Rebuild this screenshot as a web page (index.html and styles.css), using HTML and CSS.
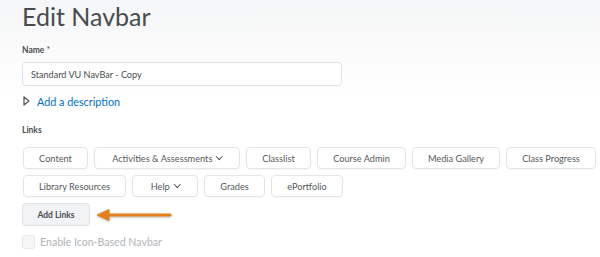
FILE: index.html
```html
<!DOCTYPE html>
<html lang="en">
<head>
    <meta charset="UTF-8">
    <title>Edit Navbar</title>
    <link rel="stylesheet" href="styles.css">
</head>
<body>
    <div class="page">
        <h1>Edit Navbar</h1>

        <label class="field-label" for="navName">Name <span class="req">*</span></label>
        <input class="text-input" id="navName" type="text" value="Standard VU NavBar - Copy">

        <div class="description">
            <svg class="tri" width="7" height="10" viewBox="0 0 7 10"><path d="M1 1 L6 5 L1 9 Z" fill="none" stroke="#565a5c" stroke-width="1.3" stroke-linejoin="round"/></svg>
            <a href="#">Add a description</a>
        </div>

        <div class="field-label links-label">Links</div>

        <div class="links">
            <button class="link-btn w-content">Content</button>
            <button class="link-btn w-activities">Activities &amp; Assessments <span class="chev"></span></button>
            <button class="link-btn w-classlist">Classlist</button>
            <button class="link-btn w-admin">Course Admin</button>
            <button class="link-btn w-media">Media Gallery</button>
            <button class="link-btn w-progress">Class Progress</button>
            <button class="link-btn w-library">Library Resources</button>
            <button class="link-btn w-help">Help <span class="chev"></span></button>
            <button class="link-btn w-grades">Grades</button>
            <button class="link-btn w-portfolio">ePortfolio</button>
        </div>

        <div class="add-row">
            <button class="add-btn">Add Links</button>
            <svg class="arrow" width="80" height="16" viewBox="0 0 80 16">
                <path d="M12 8 H74" stroke="#e2801a" stroke-width="3.2" stroke-linecap="round"/>
                <path d="M1 8 L13 2.5 L13 13.5 Z" fill="#e2801a" stroke="#e2801a" stroke-width="1" stroke-linejoin="round"/>
            </svg>
        </div>

        <div class="check-row">
            <span class="checkbox"></span>
            <span class="check-text">Enable Icon-Based Navbar</span>
        </div>
    </div>
</body>
</html>
```

FILE: styles.css
```css
/* Base styling */
html, body {
    margin: 0;
    padding: 0;
}

body {
    font-family: Lato, 'Open Sans', sans-serif;
    color: #494c4e;
    background: linear-gradient(#f5f6f7, #ffffff 95px);
    min-height: 257px;
}

.page {
    padding: 0 0 0 22px;
}

h1 {
    margin: 0;
    padding-top: 1px;
    font-size: 25px;
    font-weight: 400;
    line-height: 30px;
    color: #494c4e;
}

/* Name field */
.field-label {
    display: block;
    font-size: 8.5px;
    font-weight: 700;
    color: #494c4e;
    margin-top: 13px;
    line-height: 12px;
}

.req {
    font-weight: 400;
}

.text-input {
    display: block;
    box-sizing: border-box;
    width: 320px;
    height: 24px;
    margin-top: 6px;
    padding: 0 8px;
    border: 1px solid #dfe2e6;
    border-radius: 4px;
    background: #ffffff;
    font-family: inherit;
    font-size: 9.1px;
    color: #494c4e;
    outline: none;
}

.description {
    display: flex;
    align-items: center;
    margin-top: 8px;
    height: 14px;
}

.tri {
    margin-left: 1px;
    margin-right: 7px;
}

.description a {
    color: #006fbf;
    text-decoration: none;
    font-size: 10.8px;
}

.links-label {
    margin-top: 16px;
}

/* Link buttons */
.links {
    display: flex;
    flex-wrap: wrap;
    gap: 6px;
    margin-top: 11px;
    padding-left: 1px;
    width: 578px;
}

.link-btn {
    box-sizing: border-box;
    height: 22px;
    padding: 0;
    border: 1px solid #e3e6e9;
    border-radius: 4px;
    background: #ffffff;
    font-family: inherit;
    font-size: 9.2px;
    color: #565a5c;
    display: flex;
    align-items: center;
    justify-content: center;
    box-shadow: 0 1px 1px rgba(0, 0, 0, 0.03);
}

.w-content { width: 65px; }
.w-activities { width: 146px; }
.w-classlist { width: 65px; }
.w-admin { width: 89px; }
.w-media { width: 88px; }
.w-progress { width: 90px; }
.w-library { width: 103px; }
.w-help { width: 66px; }
.w-grades { width: 61px; }
.w-portfolio { width: 72px; }

.chev {
    display: inline-block;
    width: 3.5px;
    height: 3.5px;
    margin-left: 5px;
    margin-top: -3px;
    border-right: 1.8px solid #494c4e;
    border-bottom: 1.8px solid #494c4e;
    transform: rotate(45deg);
}

.add-row {
    display: flex;
    align-items: center;
    margin-top: 6px;
}

.add-btn {
    box-sizing: border-box;
    height: 23px;
    width: 68px;
    border: 1px solid #dfe2e6;
    border-radius: 4px;
    background: #f1f3f5;
    font-family: inherit;
    font-size: 8.5px;
    font-weight: 700;
    color: #494c4e;
}

.arrow {
    margin-left: 6px;
    filter: drop-shadow(0 1px 1px rgba(0, 0, 0, 0.25));
}

/* Checkbox */
.check-row {
    display: flex;
    align-items: center;
    margin-top: 9px;
}

.checkbox {
    box-sizing: border-box;
    width: 13px;
    height: 14px;
    border: 1px solid #e6e8ea;
    border-radius: 3px;
    background: #f6f7f8;
}

.check-text {
    margin-left: 5px;
    font-size: 10.6px;
    color: #b1b5b8;
}
```
